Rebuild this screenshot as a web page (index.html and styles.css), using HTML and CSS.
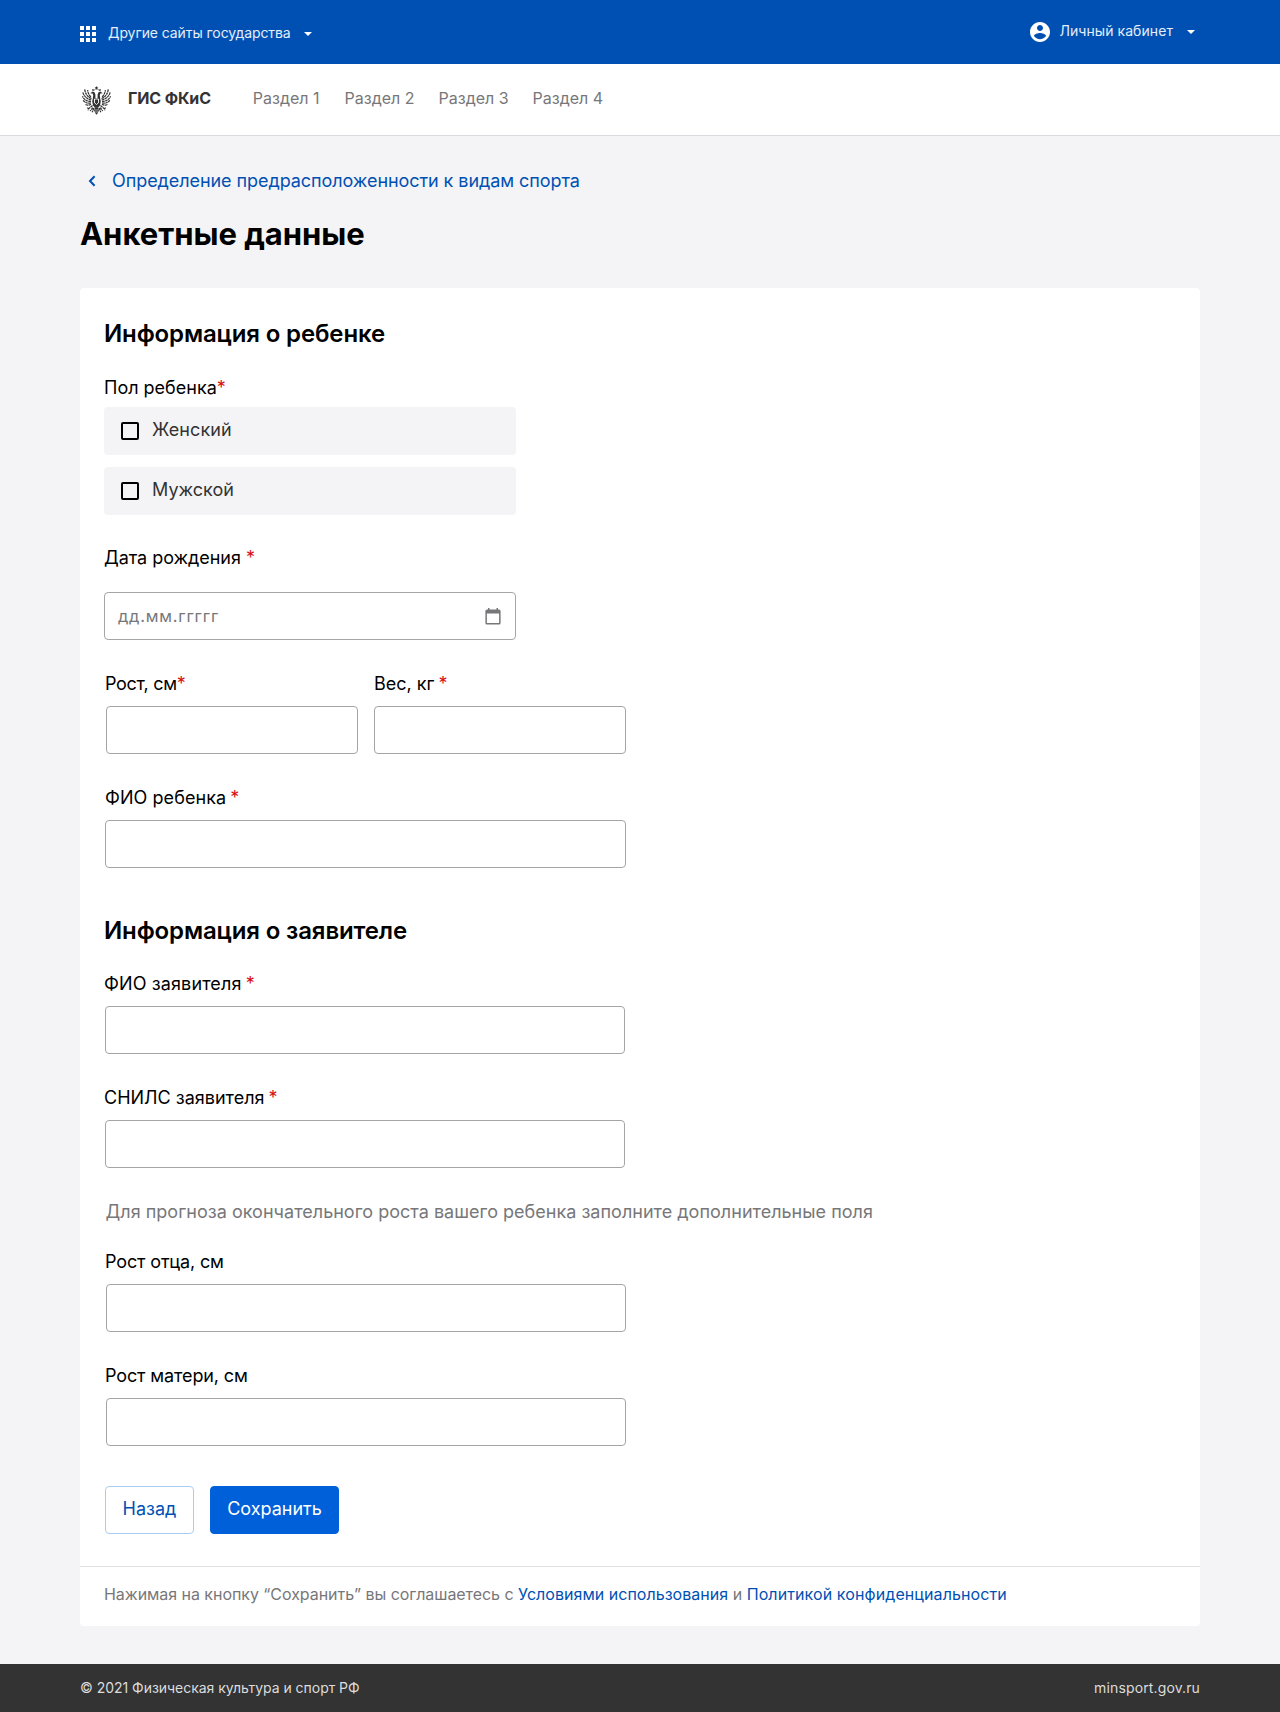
FILE: index.html
```html
<!DOCTYPE html>
<html lang="ru">
<head>
<meta charset="utf-8">
<title>Анкетные данные</title>
<link rel="stylesheet" href="styles.css">
</head>
<body>
<div class="topbar">
  <a class="sites"><svg class="grid-icon" viewBox="0 0 16 16"><path d="M0 0h4v4H0zM6 0h4v4H6zM12 0h4v4h-4zM0 6h4v4H0zM6 6h4v4H6zM12 6h4v4h-4zM0 12h4v4H0zM6 12h4v4H6zM12 12h4v4h-4z"/></svg><span class="t-sites">Другие сайты государства</span><svg class="caret" viewBox="0 0 8 4"><path d="M0 0h8L4 4z"/></svg></a>
  <a class="account"><svg class="user-icon" viewBox="2 2 20 20"><path d="M12 2C6.48 2 2 6.48 2 12s4.48 10 10 10 10-4.480 10-10S17.520 2 12 2zm0 3c1.660 0 3 1.340 3 3s-1.340 3-3 3-3-1.340-3-3 1.340-3 3-3zm0 14.200c-2.500 0-4.710-1.280-6-3.220.030-1.990 4-3.080 6-3.080 1.990 0 5.970 1.090 6 3.080-1.290 1.940-3.500 3.220-6 3.220z"/></svg><span class="t-account">Личный кабинет</span><svg class="caret" viewBox="0 0 8 4"><path d="M0 0h8L4 4z"/></svg></a>
</div>
<header class="header">
  <svg class="emblem" viewBox="0 0 29 29">
    <g fill="#333">
      <path d="M14.500 0l.600 1.200 1.200.300-.8.800.2 1.100h-2.400l.2-1.100-.8-.8 1.200-.3z"/>
      <path d="M10.200 3l1.200.6 1.200-.5-.3 1.700h-2zM16.400 3.100l1.200.5 1.200-.6-.1 1.800h-2z"/>
      <path d="M8.300 7.200l2.200-1.700 2 .7.900 2.300v3.200l1.100.9 1.100-.9V8.500l.9-2.300 2-.7 2.200 1.700-2.300.2-.6 1.800.4 3.500.6 2.500-.8 4.300-2 2.300h-3l-2-2.300-.8-4.300.6-2.500.4-3.500-.6-1.800z"/>
      <path d="M12.900 21.600h3.200l.8 2.600-1 2.700-1.400 1.900-1.400-1.900-1-2.700z"/>
    </g>
    <g class="feathers">
      <path d="M9.500 12.500Q3.500 10 2.700 3.200M9.300 14Q2.800 12.500 .8 6.400M9 15.500Q3 15.300.4 10.300M8.900 16.800Q4 18 1.200 14.300M9 18.200Q5.800 20 3 18.200M8.800 11Q6.200 8.200 5.600 4.200"/>
      <path d="M19.500 12.500Q25.500 10 26.300 3.200M19.700 14Q26.200 12.500 28.200 6.400M20 15.500Q26 15.300 28.600 10.300M20.100 16.800Q25 18 27.800 14.300M20 18.200Q23.200 20 26 18.200M20.200 11Q22.800 8.200 23.400 4.200"/>
      <path d="M10.500 19.500L6.800 22.600M5.300 21.600l1.300 1.200-.6 1.600M18.500 19.500l3.700 3.100M23.700 21.600l-1.300 1.200.6 1.600M11.800 22l-1.600 4.300M17.200 22l1.600 4.300M10.800 21.600L8.300 25M18.200 21.600l2.500 3.400"/>
    </g>
    <path d="M12.500 13h4v3.800l-2 1.700-2-1.700z" fill="none" stroke="#fff" stroke-width=".9"/>
    <path d="M12.700 24h3.600M13 26h3" stroke="#fff" stroke-width=".6"/>
  </svg>
  <span class="brand">ГИС ФКиС</span>
  <nav class="nav"><a>Раздел 1</a><a>Раздел 2</a><a>Раздел 3</a><a>Раздел 4</a></nav>
</header>
<main class="main">
  <a class="back-link"><svg class="chevron" viewBox="0 0 8 12"><path d="M6.600 1.200L2 6l4.600 4.800"/></svg><span class="t-back">Определение предрасположенности к видам спорта</span></a>
  <h1>Анкетные данные</h1>
  <form class="card">
    <div class="fields">
      <h2>Информация о ребенке</h2>
      <div class="label label-sex">Пол ребенка<i>*</i></div>
      <div class="options">
        <label class="option"><span class="box"></span><span class="option-text">Женский</span></label>
        <label class="option"><span class="box"></span><span class="option-text">Мужской</span></label>
      </div>
      <div class="label label-date"><span class="t-date">Дата рождения</span> <i>*</i></div>
      <div class="input date"><span class="placeholder">дд.мм.ггггг</span><svg class="calendar" viewBox="0 0 16 17"><path d="M3 0h1.500v1.500h7V0H13v1.500h1a1.600 1.600 0 0 1 1.600 1.600v11.800a1.600 1.600 0 0 1-1.600 1.600H2a1.600 1.600 0 0 1-1.600-1.600V3.100A1.600 1.600 0 0 1 2 1.500h1zM1.900 5.600v9.500h12.200V5.600z"/></svg></div>
      <div class="pair">
        <div><div class="label out"><span class="t-height">Рост, см</span><i>*</i></div><div class="input"></div></div>
        <div><div class="label">Вес, кг <i class="near">*</i></div><div class="input"></div></div>
      </div>
      <div class="field child"><div class="label"><span class="t-child">ФИО ребенка</span> <i class="near">*</i></div><div class="input"></div></div>
      <h2 class="second">Информация о заявителе</h2>
      <div class="field applicant first"><div class="label out"><span class="t-app">ФИО заявителя</span> <i class="near">*</i></div><div class="input"></div></div>
      <div class="field applicant"><div class="label out">СНИЛС заявителя <i class="near">*</i></div><div class="input"></div></div>
      <p class="hint">Для прогноза окончательного роста вашего ребенка заполните дополнительные поля</p>
      <div class="field parent father"><div class="label out"><span class="t-parent">Рост отца, см</span></div><div class="input"></div></div>
      <div class="field parent"><div class="label out"><span class="t-parent">Рост матери, см</span></div><div class="input"></div></div>
      <div class="actions"><button type="button" class="btn">Назад</button><button type="button" class="btn primary">Сохранить</button></div>
    </div>
    <p class="consent"><span class="t-agree">Нажимая на кнопку “Сохранить” вы соглашаетесь с</span> <a class="t-terms">Условиями использования</a> <span>и</span> <a class="t-policy">Политикой конфиденциальности</a></p>
  </form>
</main>
<footer class="footer"><span class="t-copy">© 2021 Физическая культура и спорт РФ</span><span class="t-site">minsport.gov.ru</span></footer>
</body>
</html>
```
FILE: styles.css
```css
* { box-sizing: border-box; }
body { margin: 0; background: #f4f4f7; color: #000; font: 18px/24px Inter, "Liberation Sans", sans-serif; }
h1, h2, p { margin: 0; }
svg { display: block; flex: none; }
i { font-style: normal; color: #d70f14; }
.near { margin-left: -1px; }

.topbar { height: 64px; padding: 0 80px; background: #0050b3; color: #e4edf8; display: flex; justify-content: space-between; font-size: 14px; line-height: 20px; }
.topbar svg { fill: #fff; }
.sites, .account { display: flex; align-items: center; }
.sites { padding-top: 4px; }
.account { padding-right: 5px; }
.grid-icon { width: 16px; height: 16px; margin-right: 12px; }
.user-icon { width: 20px; height: 20px; margin-right: 9px; }
.caret { width: 8px; height: 4px; margin-left: 14px; }
.t-sites { letter-spacing: -.08px; padding-bottom: 2px; }
.t-account { letter-spacing: .07px; padding-bottom: 2px; }
.sites .caret { margin-left: 13px; }

.header { height: 72px; padding: 0 82px; background: #fff; border-bottom: 1px solid #d9d9de; display: flex; align-items: center; font-size: 16px; }
.emblem { width: 29px; height: 29px; margin-top: 2px; }
.feathers { fill: none; stroke: #333; stroke-width: 1.25; stroke-dasharray: 2.6 .5; }
.brand { margin-left: 17px; font-weight: 700; letter-spacing: -.12px; color: #333; padding-bottom: 3px; }
.nav { display: flex; gap: 24px; margin-left: 42px; color: #77777a; padding-bottom: 3px; }
.nav a:first-child { margin-right: 1px; }

.main { padding: 33px 80px 38px; }
.back-link { display: flex; align-items: center; padding-left: 8px; color: #0050b3; }
.chevron { width: 8px; height: 12px; margin-right: 16px; fill: none; stroke: #0050b3; stroke-width: 2; }
.t-back { letter-spacing: -.07px; }
h1 { font-size: 31px; line-height: 40px; font-weight: 700; letter-spacing: -.03px; margin-top: 21px; }

.card { margin-top: 34px; background: #fff; border-radius: 4px; }
.fields { padding: 30px 24px 32px; }
h2 { font-size: 24px; line-height: 32px; font-weight: 600; letter-spacing: -.14px; }
.second { margin-top: 47px; }
.label { margin-bottom: 10px; }
.out { margin-left: -1px; }
.label-sex { margin: 26px 0 7px; }
.label-date { margin: 31px 0 22px; }
.t-date { letter-spacing: -.05px; }
.t-height { letter-spacing: -.3px; }
.t-child { letter-spacing: .06px; }
.t-app { letter-spacing: .12px; }
.t-parent { letter-spacing: -.12px; }
.options { display: flex; flex-direction: column; gap: 12px; width: 412px; }
.option { height: 48px; padding-left: 17px; display: flex; align-items: center; background: #f4f4f7; border-radius: 4px; color: #333; }
.option-text { padding-bottom: 2px; letter-spacing: .05px; }
.box { width: 18px; height: 18px; border: 2px solid #000; border-radius: 2px; margin-right: 13px; }
.input { height: 48px; border: 1px solid #a5a5a8; border-radius: 4px; background: #fff; }
.date { width: 412px; padding: 0 14px 0 13px; display: flex; align-items: center; justify-content: space-between; }
.placeholder { color: #77777a; font-size: 16.5px; letter-spacing: .76px; }
.calendar { width: 16px; height: 17px; fill: #77777a; }
.pair { display: flex; gap: 16px; margin: 32px 0 0 2px; }
.pair > div { width: 252px; }
.field { margin-top: 32px; }
.child { width: 521px; margin-left: 1px; }
.applicant { width: 520px; margin-left: 1px; }
.second + .first { margin-top: 25px; }
.hint { margin: 32px 0 0 1.5px; letter-spacing: .02px; color: #77777a; }
.parent { width: 520px; margin-left: 2px; }
.father { margin-top: 26px; }
.actions { display: flex; gap: 16px; margin: 40px 0 0 1px; }
.btn { width: 89px; height: 48px; padding: 0 0 2px; border: 1px solid #a9cbf5; border-radius: 4px; background: #fff; color: #0050b3; font: inherit; white-space: nowrap; }
.primary { width: 129px; border-color: #0060d9; background: #0060d9; color: #fff; }
.consent { border-top: 1px solid #e1e1e6; padding: 15px 24px 20px; font-size: 16px; color: #77777a; white-space: nowrap; }
.consent a { color: #0050b3; }
.t-agree { letter-spacing: -.05px; }
.t-terms { letter-spacing: .03px; }
.t-policy { letter-spacing: .1px; }

.footer { height: 48px; padding: 0 80px; background: #333; color: #dcdcdc; display: flex; align-items: center; justify-content: space-between; font-size: 14px; }
.t-copy { letter-spacing: -.03px; }
.t-site { letter-spacing: .13px; }
```
